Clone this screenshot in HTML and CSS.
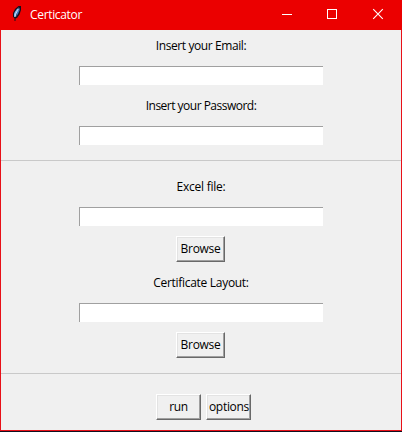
FILE: index.html
```
<!DOCTYPE html>
<html lang="en">
<head>
<meta charset="utf-8">
<title>Certicator</title>
<link rel="stylesheet" href="styles.css">
</head>
<body>
<div class="window">
  <header class="titlebar">
    <svg class="feather" width="10" height="16" viewBox="0 0 10 16">
      <path d="M6.500 0H9v4L7.500 8.500 5 12 3.500 12.500V15h-1v-3L1 11V7l2-4Z" fill="#14101c"/>
      <path d="M7 1.200 4.800 3.200 2.800 6 2 8v2.500l1 .5L5 6.500Z" fill="#7fb8ee"/>
      <path d="M7.800 1.500 7.500 4.500 6 8 4 11 5.200 6Z" fill="#3f78c8"/>
      <path d="M6.500 3 4 7.500 3 11" fill="none" stroke="#d9ecff" stroke-width=".8"/>
    </svg>
    <span class="title">Certicator</span>
    <div class="controls">
      <svg width="45" height="29" viewBox="0 0 45 29" shape-rendering="crispEdges"><path d="M17 14h10v1H17z" fill="#fff"/></svg>
      <svg width="45" height="29" viewBox="0 0 45 29" shape-rendering="crispEdges"><path d="M17.500 9.500h9v9h-9z" fill="none" stroke="#fff"/></svg>
      <svg width="45" height="29" viewBox="0 0 45 29"><path d="m18.200 9.200 9.600 9.600m0-9.600-9.600 9.600" fill="none" stroke="#fff" stroke-width="1.100"/></svg>
    </div>
  </header>
  <main class="content">
    <section class="login">
      <label class="label email" for="email">Insert your Email:</label>
      <input class="field" id="email" type="text">
      <label class="label password" for="password">Insert your Password:</label>
      <input class="field" id="password" type="password">
    </section>
    <section class="files">
      <label class="label excel" for="excel">Excel file:</label>
      <input class="field" id="excel" type="text">
      <button class="button browse">Browse</button>
      <label class="label layout" for="layout">Certificate Layout:</label>
      <input class="field" id="layout" type="text">
      <button class="button browse">Browse</button>
    </section>
    <section class="actions">
      <button class="button run">run</button>
      <button class="button options">options</button>
    </section>
  </main>
</div>
</body>
</html>
```
FILE: styles.css
```
* { box-sizing: border-box; }
body {
  margin: 0;
  background: #101020;
  font: 12px/16px "Open Sans", "Noto Sans", sans-serif;
  color: #000;
}
.window {
  width: 402px;
  height: 431px;
  border: 1px solid #e81018;
  border-top: 0;
  background: #f0f0f0;
}
.titlebar {
  display: flex;
  height: 30px;
  margin: 0 -1px;
  padding-left: 12px;
  background: #eb0000;
  color: #fff;
}
.feather { margin-top: 6px; }
.title { margin: 7px 0 0 8px; letter-spacing: -.33px; }
.controls { display: flex; margin-left: auto; padding-right: 2px; }
.controls svg { display: block; }
section { display: flex; flex-direction: column; align-items: center; }
.login { height: 131px; padding-top: 8px; border-bottom: 1px solid #c9c9c9; }
.files { height: 213px; padding-top: 18px; border-bottom: 1px solid #c9c9c9; }
.actions { flex-direction: row; justify-content: center; align-items: flex-start; gap: 5px; padding: 20px 0 0 5px; }
.label { height: 16px; margin-bottom: 12px; letter-spacing: -.3px; white-space: nowrap; }
.email { letter-spacing: -.4px; }
.password { letter-spacing: -.51px; }
.excel { letter-spacing: -.25px; }
.field {
  flex: none;
  width: 244px;
  height: 19px;
  margin: 0;
  padding: 0 3px;
  border: 0 solid #a0a0a0;
  border-width: 1px 0 0 1px;
  background: #fff;
  outline: 0;
}
.field + .label { margin-top: 13px; }
.button {
  flex: none;
  height: 26px;
  padding: 0;
  border: 1px solid;
  border-color: #fff #696969 #696969 #fff;
  background: #f0f0f0;
  box-shadow: inset -1px -1px #a0a0a0, inset 1px 1px #e3e3e3;
  color: #000;
  font: inherit;
  letter-spacing: -.3px;
}
.browse { width: 49px; margin: 10px 1px 0 0; }
.browse + .label { margin-top: 13px; }
.run, .options { width: 45px; }
.options { padding-left: 1px; }
```
